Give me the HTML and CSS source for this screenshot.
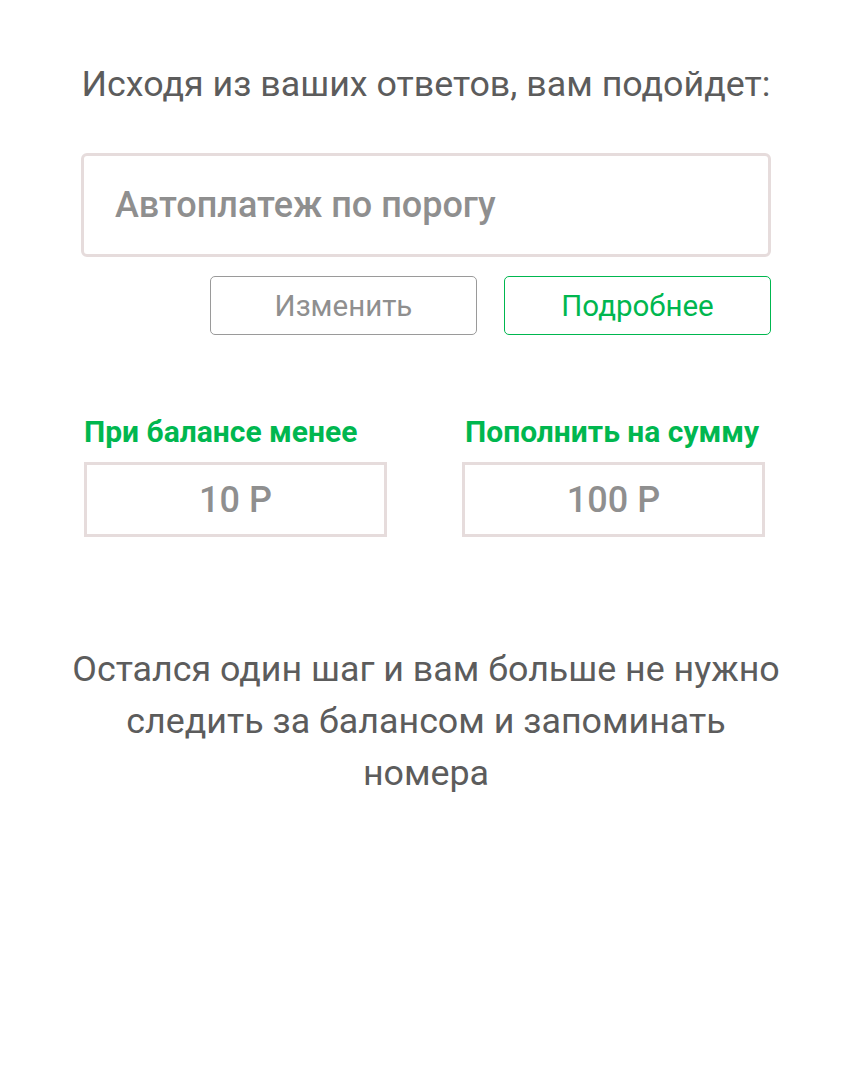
FILE: index.html
```html
<!DOCTYPE html>
<html lang="ru">
<head>
<meta charset="utf-8">
<link rel="stylesheet" href="styles.css">
</head>
<body>
<main class="page">
  <h1 class="title">Исходя из ваших ответов, вам подойдет:</h1>
  <div class="plan">Автоплатеж по порогу</div>
  <div class="actions">
    <button class="btn btn-grey">Изменить</button>
    <button class="btn btn-green">Подробнее</button>
  </div>
  <div class="fields">
    <div class="field">
      <div class="label">При балансе менее</div>
      <div class="value">10 Р</div>
    </div>
    <div class="field">
      <div class="label label-shift">Пополнить на сумму</div>
      <div class="value">100 Р</div>
    </div>
  </div>
  <p class="note">Остался один шаг и вам больше не нужно следить за балансом и запоминать номера</p>
</main>
</body>
</html>
```
FILE: styles.css
```css
html, body {
  margin: 0;
  padding: 0;
  background: #fff;
}
body {
  font-family: Roboto, "Noto Sans", sans-serif;
}
.page {
  width: 849px;
  height: 1092px;
  box-sizing: border-box;
  padding: 60px 78px 0 81px;
  display: flex;
  flex-direction: column;
}
.title {
  margin: 0 -20px;
  font-size: 35.8px;
  font-weight: 400;
  color: #5c5c5c;
  text-align: center;
  line-height: 48px;
  white-space: nowrap;
}
.plan {
  margin-top: 45px;
  height: 104px;
  box-sizing: border-box;
  border: 3px solid #e6dcdc;
  border-radius: 6px;
  padding-left: 31px;
  display: flex;
  align-items: center;
  font-size: 36px;
  font-weight: 500;
  color: #8f8f8f;
}
.actions {
  margin-top: 19px;
  display: flex;
  justify-content: flex-end;
  gap: 27px;
}
.btn {
  width: 267px;
  height: 59px;
  box-sizing: border-box;
  background: #fff;
  border-radius: 5px;
  font-family: inherit;
  font-size: 29.5px;
  font-weight: 400;
  padding: 0;
}
.btn-grey {
  border: 1.5px solid #9a9a9a;
  color: #8f8f8f;
}
.btn-green {
  border: 1.5px solid #00b74f;
  color: #00b74f;
}
.fields {
  margin-top: 78px;
  display: flex;
  gap: 75px;
  padding-left: 3px;
}
.field {
  width: 303px;
}
.label {
  font-size: 30px;
  font-weight: 700;
  color: #00b74f;
  line-height: 38px;
  white-space: nowrap;
}
.label-shift {
  padding-left: 3px;
}
.value {
  margin-top: 11px;
  height: 75px;
  box-sizing: border-box;
  border: 3px solid #e6dcdc;
  display: flex;
  align-items: center;
  justify-content: center;
  font-size: 36px;
  font-weight: 500;
  color: #8f8f8f;
}
.note {
  margin: 106px -14px 0 -14px;
  font-size: 35.8px;
  line-height: 52px;
  color: #5c5c5c;
  text-align: center;
}
```
